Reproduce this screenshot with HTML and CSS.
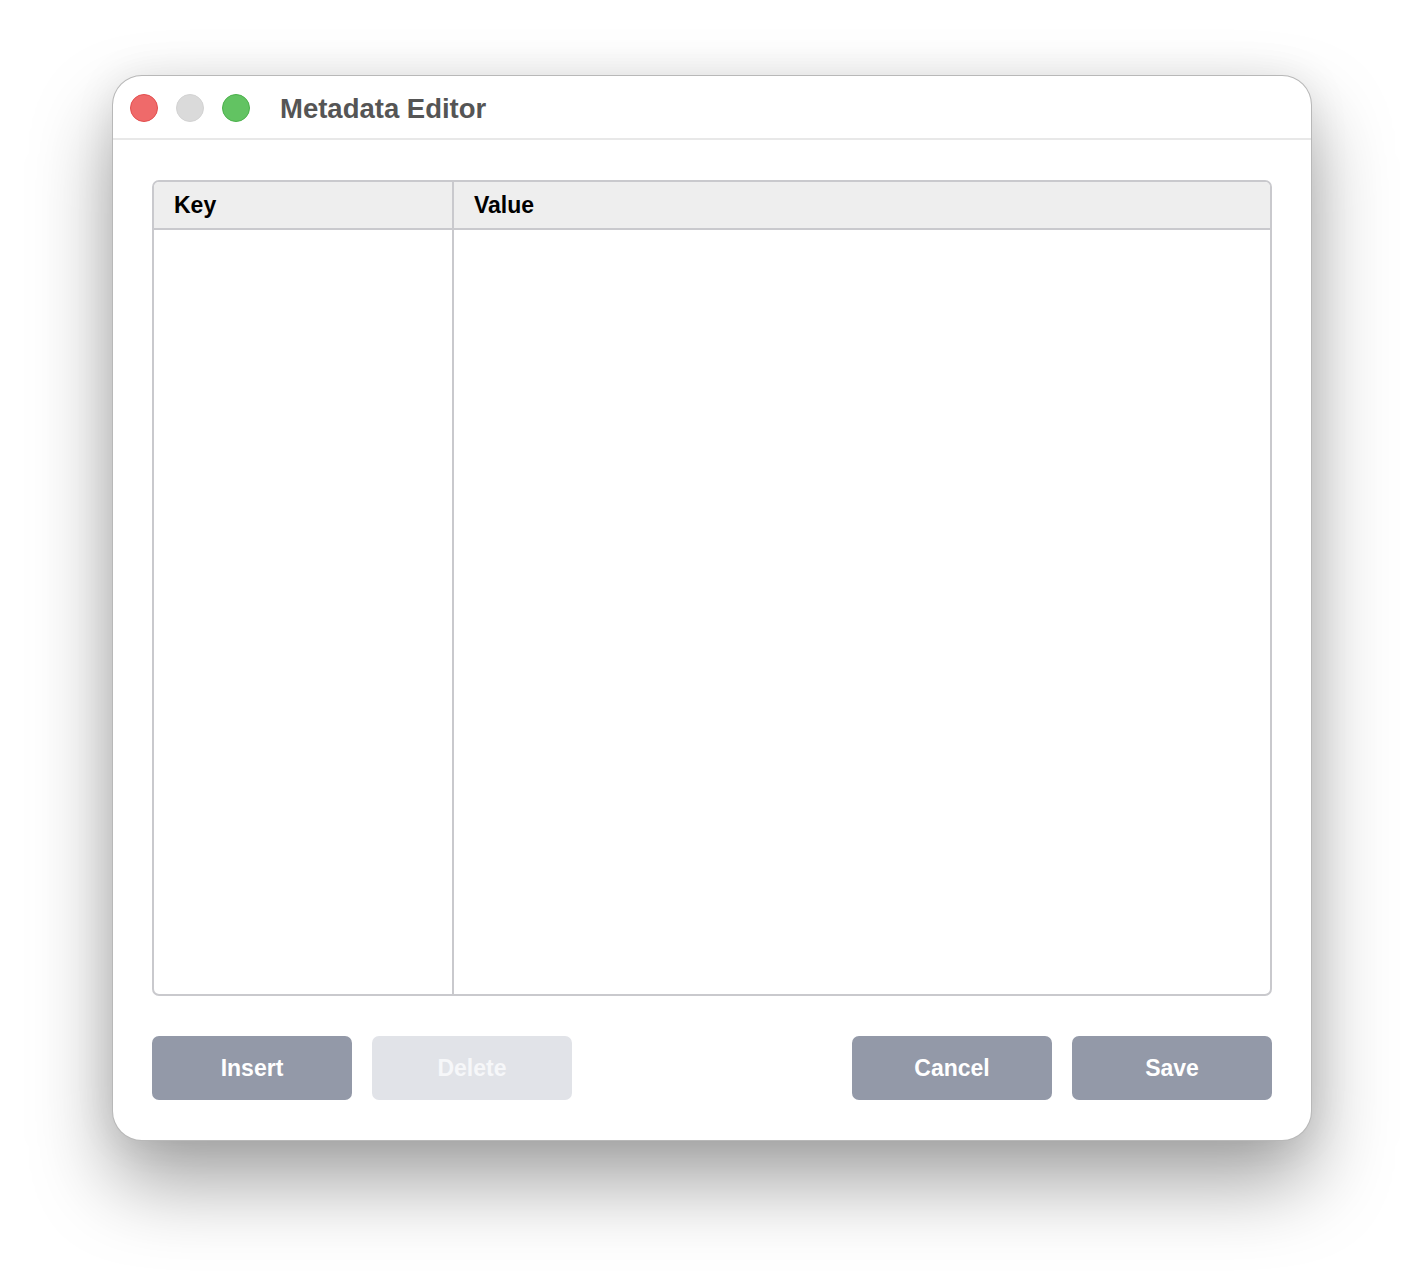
FILE: index.html
```html
<!DOCTYPE html>
<html lang="en">
<head>
<meta charset="utf-8">
<title>Metadata Editor</title>
<link rel="stylesheet" href="styles.css">
</head>
<body>
<div class="window">
  <div class="titlebar">
    <div class="lights">
      <span class="light red"></span>
      <span class="light gray"></span>
      <span class="light green"></span>
    </div>
    <div class="title">Metadata Editor</div>
  </div>
  <div class="content">
    <div class="table">
      <div class="thead">
        <div class="th key">Key</div>
        <div class="th value">Value</div>
      </div>
      <div class="tbody">
        <div class="td key"></div>
        <div class="td value"></div>
      </div>
    </div>
    <div class="actions">
      <div class="group">
        <button class="btn">Insert</button>
        <button class="btn disabled" disabled>Delete</button>
      </div>
      <div class="group">
        <button class="btn">Cancel</button>
        <button class="btn">Save</button>
      </div>
    </div>
  </div>
</div>
</body>
</html>
```

FILE: styles.css
```css
html, body {
  margin: 0;
  padding: 0;
  background: #ffffff;
}
body {
  width: 1424px;
  height: 1288px;
  display: flex;
  justify-content: center;
  align-items: flex-start;
  padding-top: 75px;
  box-sizing: border-box;
  font-family: "Liberation Sans", Arial, sans-serif;
  overflow: hidden;
}
.window {
  width: 1200px;
  height: 1066px;
  box-sizing: border-box;
  border: 1px solid rgba(0,0,0,0.28);
  border-radius: 30px;
  background: #ffffff;
  box-shadow: 0 42px 80px rgba(0,0,0,0.36), 0 0 40px rgba(0,0,0,0.08);
  display: flex;
  flex-direction: column;
  overflow: hidden;
}
.titlebar {
  height: 62px;
  border-bottom: 2px solid #e8e8e8;
  display: flex;
  align-items: center;
  padding-left: 17px;
  flex-shrink: 0;
}
.lights {
  display: flex;
  gap: 18px;
  margin-top: 2px;
}
.light {
  width: 26px;
  height: 26px;
  border-radius: 50%;
  border: 1px solid transparent;
}
.light.red { background: #ef6a6a; border-color: #e24e4e; }
.light.gray { background: #dadada; border-color: #d2d2d2; }
.light.green { background: #62c362; border-color: #4bb04b; }
.title {
  margin-left: 30px;
  font-size: 27.5px;
  font-weight: bold;
  color: #555555;
  margin-top: 4px;
}
.content {
  flex: 1;
  padding: 40px 39px;
  display: flex;
  flex-direction: column;
  gap: 40px;
}
.table {
  flex: 1;
  border: 2px solid #c9c9cd;
  border-radius: 7px;
  display: flex;
  flex-direction: column;
  overflow: hidden;
}
.thead {
  display: flex;
  height: 46px;
  background: #eeeeee;
  border-bottom: 2px solid #c9c9cd;
}
.th {
  display: flex;
  align-items: center;
  padding-left: 20px;
  font-size: 23px;
  font-weight: bold;
  color: #000000;
}
.key {
  width: 278px;
  border-right: 2px solid #c9c9cd;
}
.value {
  flex: 1;
}
.tbody {
  flex: 1;
  display: flex;
}
.td.key {
  width: 298px;
  padding: 0;
}
.actions {
  display: flex;
  justify-content: space-between;
}
.group {
  display: flex;
  gap: 20px;
}
.btn {
  width: 200px;
  height: 64px;
  border: none;
  border-radius: 7px;
  background: #9399a8;
  color: #ffffff;
  font-family: "Liberation Sans", Arial, sans-serif;
  font-size: 23px;
  font-weight: bold;
  padding: 0;
}
.btn.disabled {
  background: #e1e3e8;
  color: #f6f7f9;
}
```
